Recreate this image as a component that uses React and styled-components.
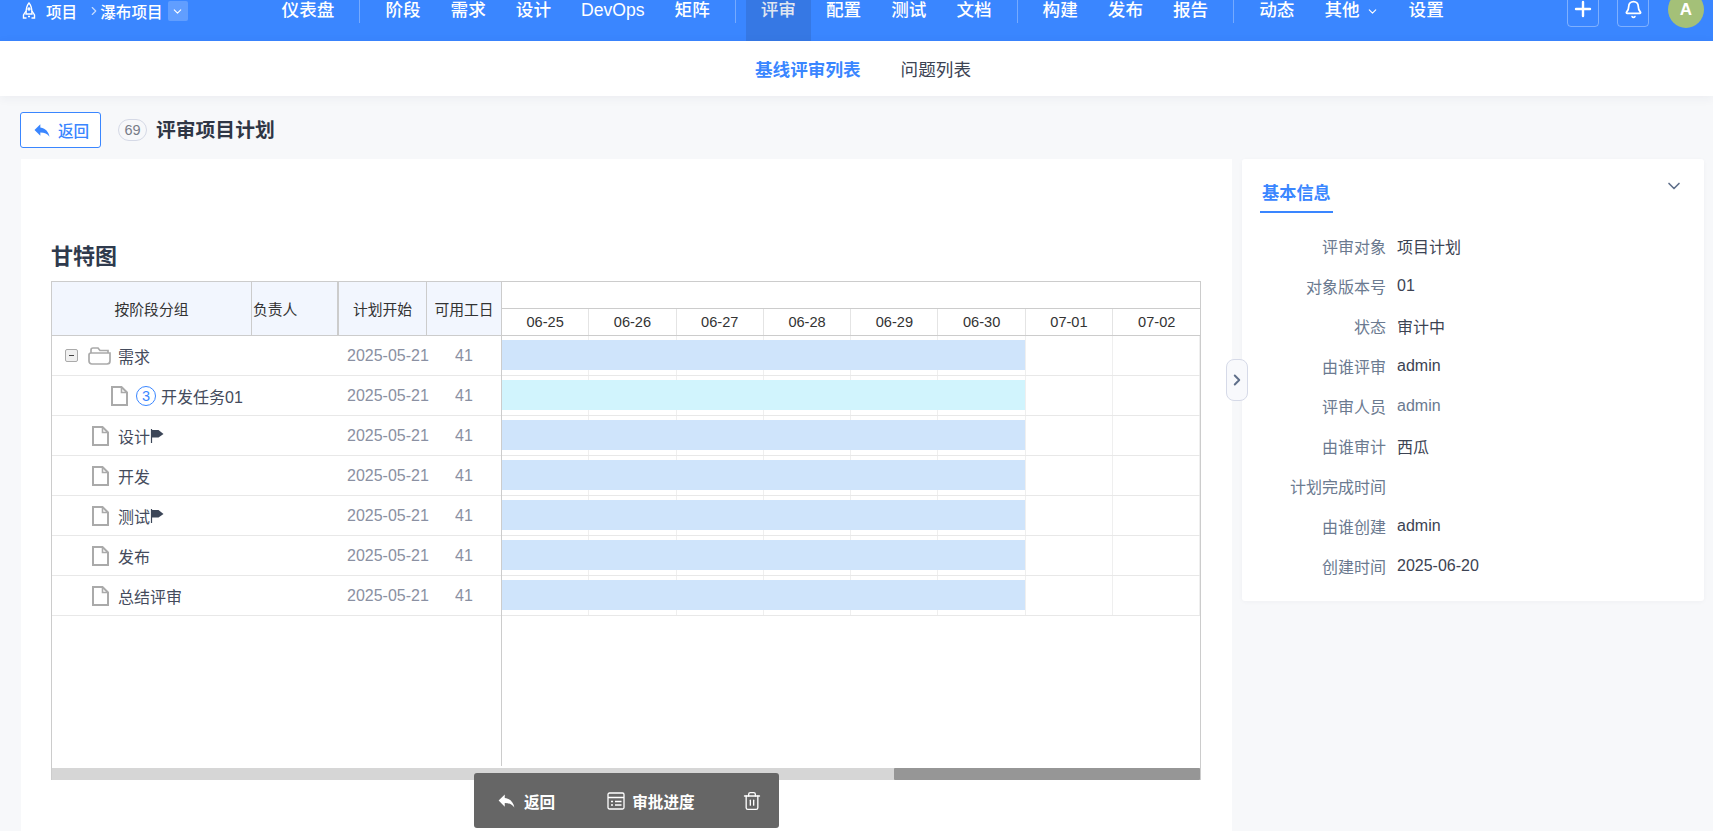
import React from "react";
import styled, { createGlobalStyle } from "styled-components";
import { Bell, ChevronDown, ChevronRight, Plus, Trash2 } from "lucide-react";
import { MdReply } from "react-icons/md";

const FONT = `"Liberation Sans", "Noto Sans CJK SC", sans-serif`;

const Global = createGlobalStyle`
  html, body { margin: 0; padding: 0; height: 100%; overflow: hidden; background: #f7f8fa; }
  body { font-family: ${FONT}; color: #3c4353; }
  * { box-sizing: border-box; }
`;

const Page = styled.div`
  position: relative;
  margin-top: -9px;
  height: 840px;
  overflow: hidden;
`;

const Header = styled.header`
  display: flex;
  align-items: stretch;
  height: 50px;
  background: #3a86ff;
  color: #fff;
`;

const Crumbs = styled.div`
  width: 266.6px;
  flex: none;
  display: flex;
  align-items: center;
  padding: 0 0 10px 22px;
  font-size: 15.6px;
  font-weight: 500;
`;

const CrumbLabel = styled.span`
  margin-left: ${(p) => p.$gap}px;
  white-space: nowrap;
`;

const CrumbArrow = styled.span`
  display: flex;
  margin-left: 10px;
  margin-right: -1px;
  opacity: 0.7;
`;

const ProjectSwitch = styled.span`
  display: flex;
  align-items: center;
  justify-content: center;
  width: 20px;
  height: 20px;
  margin-left: 5px;
  border-radius: 2px;
  background: rgba(255, 255, 255, 0.2);
`;

const Nav = styled.nav`
  display: flex;
  align-items: stretch;
`;

const NavItem = styled.a`
  display: flex;
  align-items: center;
  gap: 6px;
  padding: 0 15px 10px;
  font-size: 17.6px;
  line-height: 1;
  font-weight: ${(p) => (p.$latin ? 400 : 500)};
  white-space: nowrap;
  color: ${(p) => (p.$active ? "#e0e6f0" : "#fff")};
  background: ${(p) => (p.$active ? "#3678e4" : "transparent")};
`;

const NavDivider = styled.span`
  width: 1px;
  height: 32px;
  margin: 0 10px;
  background: rgba(255, 255, 255, 0.3);
`;

const HeaderTools = styled.div`
  display: flex;
  align-items: flex-start;
  margin-left: auto;
  padding-right: 9px;
  gap: 18px;
`;

const ToolButton = styled.span`
  display: flex;
  align-items: center;
  justify-content: center;
  width: 32px;
  height: 36px;
  border: 1px solid rgba(255, 255, 255, 0.35);
  border-radius: 4px;
`;

const Avatar = styled.span`
  display: flex;
  align-items: center;
  justify-content: center;
  width: 36px;
  height: 37px;
  margin-left: 1px;
  border-radius: 50%;
  background: #a4c078;
  font-size: 17px;
  font-weight: 700;
`;

const SubNav = styled.div`
  display: flex;
  justify-content: center;
  align-items: center;
  gap: 40px;
  height: 55px;
  padding-left: 13px;
  background: #fff;
  box-shadow: 0 2px 10px rgba(40, 50, 80, 0.06);
  position: relative;
`;

const SubTab = styled.a`
  font-size: 17.6px;
  font-weight: ${(p) => (p.$active ? 700 : 400)};
  color: ${(p) => (p.$active ? "#3a86ff" : "#3c4353")};
`;

const TitleBar = styled.div`
  display: flex;
  align-items: center;
  height: 63px;
  padding: 4px 0 0 20px;
`;

const BackButton = styled.button`
  display: flex;
  align-items: center;
  justify-content: center;
  gap: 6px;
  width: 81px;
  height: 36px;
  padding: 0;
  border: 1px solid #3a86ff;
  border-radius: 3px;
  background: #fff;
  color: #3a86ff;
  font-family: ${FONT};
  font-size: 15.6px;
  font-weight: 500;
`;

const CountBadge = styled.span`
  display: flex;
  align-items: center;
  justify-content: center;
  width: 29px;
  height: 22px;
  margin-left: 17px;
  border: 1px solid #d5d9e6;
  border-radius: 11px;
  color: #777c88;
  font-size: 14.5px;
`;

const PageTitle = styled.h1`
  margin: 0 0 0 9px;
  font-size: 19.8px;
  line-height: 28px;
  font-weight: 700;
  color: #2f3645;
`;

const Body = styled.div`
  display: flex;
  align-items: flex-start;
  gap: 10px;
  padding: 0 9px 0 21px;
`;

const Card = styled.main`
  flex: none;
  width: 1211px;
  height: 700px;
  padding: 82px 31px 0 30px;
  background: #fff;
`;

const GanttTitle = styled.h2`
  margin: 0 0 8px;
  font-size: 22px;
  line-height: 32px;
  font-weight: 700;
  color: #2f3a4d;
`;

const Gantt = styled.section`
  display: flex;
  flex-direction: column;
  height: 499px;
  border: 1px solid #ccc;
  background: #fff;
`;

const GanttBody = styled.div`
  display: flex;
  height: 484px;
  flex: none;
`;

const TablePane = styled.div`
  flex: none;
  width: 450px;
  border-right: 1px solid #ccc;
`;

const TableHead = styled.div`
  display: grid;
  grid-template-columns: 200px 87px 88px 74px;
  height: 54px;
  background: #f2f6fe;
  border-bottom: 1px solid #ccc;
`;

const HeadCell = styled.div`
  display: flex;
  align-items: center;
  justify-content: ${(p) => (p.$left ? "flex-start" : "center")};
  padding-left: ${(p) => (p.$left ? "1px" : "0")};
  border-right: ${(p) => p.$rule || 0}px solid #ccc;
  font-size: 14.8px;
  color: #333;
  white-space: nowrap;
  &:last-child { border-right: 0; }
`;

const Row = styled.div`
  display: grid;
  grid-template-columns: 287px 88px 74px;
  align-items: center;
  height: 40px;
  border-bottom: 1px solid #e8e8e8;
`;

const NameCell = styled.div`
  display: flex;
  align-items: center;
  padding-left: ${(p) => p.$indent}px;
  font-size: 16px;
  color: #444b5c;
  white-space: nowrap;
`;

const Expander = styled.span`
  position: relative;
  width: 13px;
  height: 13px;
  margin-right: 10px;
  border: 1px solid #aaa;
  border-radius: 2px;
  background: #f0f0f0;
  &::after {
    content: "";
    position: absolute;
    left: 3px;
    top: 5px;
    width: 5px;
    height: 1px;
    background: #444;
  }
`;

const RowIcon = styled.svg`
  flex: none;
  margin-right: ${(p) => p.$gap}px;
`;

const OrderMark = styled.span`
  display: flex;
  align-items: center;
  justify-content: center;
  width: 20px;
  height: 20px;
  margin-right: 5px;
  border: 1px solid #3a86ff;
  border-radius: 50%;
  color: #3a86ff;
  font-size: 14.5px;
`;

const DateCell = styled.div`
  padding-left: 8px;
  font-size: 16px;
  color: #8a90a2;
  white-space: nowrap;
`;

const DaysCell = styled.div`
  text-align: center;
  font-size: 16px;
  color: #8a90a2;
`;

const TimePane = styled.div`
  flex: none;
  width: 698px;
  overflow: hidden;
`;

const MonthStrip = styled.div`
  height: 27px;
  border-bottom: 1px solid #ccc;
`;

const DateStrip = styled.div`
  display: grid;
  grid-template-columns: repeat(8, 87.3px);
  height: 27px;
  border-bottom: 1px solid #ccc;
`;

const DateHead = styled.div`
  display: flex;
  align-items: center;
  justify-content: center;
  border-right: 1px solid #e4e4e4;
  font-size: 14.6px;
  color: #333;
  &:last-child { border-right: 0; }
`;

const TimeRow = styled.div`
  position: relative;
  display: grid;
  grid-template-columns: repeat(8, 87.3px);
  height: 40px;
  border-bottom: 1px solid #e8e8e8;
`;

const TimeCell = styled.div`
  border-right: 1px solid #efefef;
  &:last-child { border-right: 0; }
`;

const Bar = styled.div`
  position: absolute;
  left: 0;
  top: 4px;
  height: 30px;
  width: 523px;
  background: ${(p) => (p.$task ? "#d1f4fd" : "#cfe4fb")};
`;

const ScrollTrack = styled.div`
  display: flex;
  justify-content: flex-end;
  height: 12px;
  margin-top: 2px;
  background: #d6d6d6;
`;

const ScrollThumb = styled.div`
  width: 306px;
  height: 12px;
  background: #969696;
  border-radius: 1px;
`;

const Side = styled.aside`
  flex: none;
  width: 462px;
  height: 442px;
  padding: 17px 20px 0 18px;
  border-radius: 3px;
  background: #fff;
  box-shadow: 0 1px 4px rgba(40, 50, 80, 0.04);
`;

const SideHead = styled.div`
  display: flex;
  justify-content: space-between;
  align-items: flex-start;
  border: 0;
`;

const SideTab = styled.div`
  width: 73px;
  height: 37px;
  padding-left: 2px;
  line-height: 34px;
  border-bottom: 2px solid #3a86ff;
  font-size: 17.2px;
  font-weight: 700;
  color: #3a86ff;
  white-space: nowrap;
`;

const FieldList = styled.dl`
  margin: 13px 0 0;
`;

const Field = styled.div`
  display: flex;
  align-items: center;
  height: 40px;
  font-size: 16px;
`;

const FieldLabel = styled.dt`
  width: 126px;
  flex: none;
  text-align: right;
  color: #6b7a90;
  white-space: nowrap;
`;

const FieldValue = styled.dd`
  margin: 0 0 0 11px;
  color: ${(p) => (p.$muted ? "#6b7a90" : "#3c4353")};
`;

const CollapseHandle = styled.button`
  position: absolute;
  left: 1226px;
  top: 368px;
  display: flex;
  align-items: center;
  justify-content: center;
  width: 22px;
  height: 42px;
  padding: 0;
  border: 1px solid #d6dae8;
  border-radius: 8px;
  background: #f8f9fc;
  color: #5f6f8a;
`;

const ActionBar = styled.div`
  position: absolute;
  left: 474px;
  top: 782px;
  display: flex;
  align-items: center;
  width: 305px;
  height: 55px;
  padding-left: 22px;
  border-radius: 3px;
  background: #666;
  color: #fff;
  font-size: 15.6px;
  font-weight: 700;
`;

const ActionItem = styled.span`
  display: flex;
  align-items: center;
  gap: ${(p) => p.$gap}px;
  margin-right: ${(p) => p.$after}px;
  white-space: nowrap;
`;

const Rocket = () => (
  <svg width="14" height="18" viewBox="0 0 14 18" fill="none" stroke="#fff" strokeWidth="1.4">
    <path d="M7 1C9.5 3.5 10 7 10 12H4C4 7 4.5 3.5 7 1Z" />
    <path d="M4 9L1.5 13V16H4.5M10 9L12.5 13V16H9.5" />
    <path d="M6 14.5H8" />
    <circle cx="7" cy="7" r="1" />
  </svg>
);

const FileIcon = ({ gap }) => (
  <RowIcon $gap={gap} width="17" height="20" viewBox="0 0 17 20" fill="none" stroke="#aaa" strokeWidth="2">
    <path d="M1 1H10.5L16 6.5V19H1Z" fill="#fff" />
    <path d="M10.5 1V6.5H16" strokeWidth="1.6" />
  </RowIcon>
);

const FolderIcon = () => (
  <RowIcon $gap={7} width="23" height="18" viewBox="0 0 23 18" fill="none" stroke="#aaa" strokeWidth="1.7">
    <path d="M3 6V3C3 2 3.6 1 5 1H10L12 3.5H20V6" />
    <path d="M1 8C1 7 1.6 6 3 6H22V14C22 15.5 21 17 19 17H4C2.2 17 1 15.6 1 14Z" />
  </RowIcon>
);

const FlagIcon = () => (
  <svg width="14" height="15" viewBox="0 0 14 15">
    <path d="M1.5 1V15" stroke="#3c4658" strokeWidth="1.2" />
    <path d="M2 2H8.5L13.5 6L8.5 9.5H2Z" fill="#3c4658" />
  </svg>
);

const ListIcon = () => (
  <svg width="18" height="18" viewBox="0 0 18 18" fill="none" stroke="#fff" strokeWidth="1.3">
    <rect x="1" y="1" width="16" height="16" rx="1.5" />
    <path d="M1 5.5H17M4 9.5H6M8 9.5H14.5M4 13H6M8 13H14.5" />
  </svg>
);

const navGroups = [
  ["仪表盘"],
  ["阶段", "需求", "设计", "DevOps", "矩阵"],
  ["评审", "配置", "测试", "文档"],
  ["构建", "发布", "报告"],
];

const rows = [
  { name: "需求", kind: "group" },
  { name: "开发任务01", kind: "task" },
  { name: "设计", flag: true },
  { name: "开发" },
  { name: "测试", flag: true },
  { name: "发布" },
  { name: "总结评审" },
];

const dates = ["06-25", "06-26", "06-27", "06-28", "06-29", "06-30", "07-01", "07-02"];

const fields = [
  ["评审对象", "项目计划"],
  ["对象版本号", "01"],
  ["状态", "审计中"],
  ["由谁评审", "admin"],
  ["评审人员", "admin", true],
  ["由谁审计", "西瓜"],
  ["计划完成时间", ""],
  ["由谁创建", "admin"],
  ["创建时间", "2025-06-20"],
];

const RowName = ({ row }) => {
  if (row.kind === "group") {
    return (
      <NameCell $indent={13}>
        <Expander />
        <FolderIcon />
        {row.name}
      </NameCell>
    );
  }
  if (row.kind === "task") {
    return (
      <NameCell $indent={59}>
        <FileIcon gap={8} />
        <OrderMark>3</OrderMark>
        {row.name}
      </NameCell>
    );
  }
  return (
    <NameCell $indent={40}>
      <FileIcon gap={9} />
      {row.name}
      {row.flag && <FlagIcon />}
    </NameCell>
  );
};

export default function App() {
  return (
    <Page>
      <Global />
      <Header>
        <Crumbs>
          <Rocket />
          <CrumbLabel $gap={10}>项目</CrumbLabel>
          <CrumbArrow><ChevronRight size={14} /></CrumbArrow>
          <CrumbLabel $gap={0}>瀑布项目</CrumbLabel>
          <ProjectSwitch><ChevronDown size={13} /></ProjectSwitch>
        </Crumbs>
        <Nav>
          {navGroups.map((group, i) => (
            <React.Fragment key={i}>
              {group.map((item) => (
                <NavItem key={item} $active={item === "评审"} $latin={item === "DevOps"}>{item}</NavItem>
              ))}
              <NavDivider />
            </React.Fragment>
          ))}
          <NavItem>动态</NavItem>
          <NavItem>其他<ChevronDown size={13} /></NavItem>
          <NavItem>设置</NavItem>
        </Nav>
        <HeaderTools>
          <ToolButton><Plus size={24} strokeWidth={2.4} /></ToolButton>
          <ToolButton><Bell size={19} strokeWidth={2.2} /></ToolButton>
          <Avatar>A</Avatar>
        </HeaderTools>
      </Header>
      <SubNav>
        <SubTab $active>基线评审列表</SubTab>
        <SubTab>问题列表</SubTab>
      </SubNav>
      <TitleBar>
        <BackButton><MdReply size={20} />返回</BackButton>
        <CountBadge>69</CountBadge>
        <PageTitle>评审项目计划</PageTitle>
      </TitleBar>
      <Body>
        <Card>
          <GanttTitle>甘特图</GanttTitle>
          <Gantt>
            <GanttBody>
              <TablePane>
                <TableHead>
                  <HeadCell $rule={1}>按阶段分组</HeadCell>
                  <HeadCell $left $rule={2}>负责人</HeadCell>
                  <HeadCell $rule={1}>计划开始</HeadCell>
                  <HeadCell>可用工日</HeadCell>
                </TableHead>
                {rows.map((row) => (
                  <Row key={row.name}>
                    <RowName row={row} />
                    <DateCell>2025-05-21</DateCell>
                    <DaysCell>41</DaysCell>
                  </Row>
                ))}
              </TablePane>
              <TimePane>
                <MonthStrip />
                <DateStrip>
                  {dates.map((d) => <DateHead key={d}>{d}</DateHead>)}
                </DateStrip>
                {rows.map((row) => (
                  <TimeRow key={row.name}>
                    {dates.map((d) => <TimeCell key={d} />)}
                    <Bar $task={row.kind === "task"} />
                  </TimeRow>
                ))}
              </TimePane>
            </GanttBody>
            <ScrollTrack><ScrollThumb /></ScrollTrack>
          </Gantt>
        </Card>
        <Side>
          <SideHead>
            <SideTab>基本信息</SideTab>
            <ChevronDown size={20} color="#5f6f8a" />
          </SideHead>
          <FieldList>
            {fields.map(([label, value, muted]) => (
              <Field key={label}>
                <FieldLabel>{label}</FieldLabel>
                <FieldValue $muted={muted}>{value}</FieldValue>
              </Field>
            ))}
          </FieldList>
        </Side>
      </Body>
      <CollapseHandle><ChevronRight size={18} strokeWidth={2.6} /></CollapseHandle>
      <ActionBar>
        <ActionItem $gap={7} $after={52}><MdReply size={21} />返回</ActionItem>
        <ActionItem $gap={7} $after={47}><ListIcon />审批进度</ActionItem>
        <Trash2 size={20} strokeWidth={1.6} />
      </ActionBar>
    </Page>
  );
}
